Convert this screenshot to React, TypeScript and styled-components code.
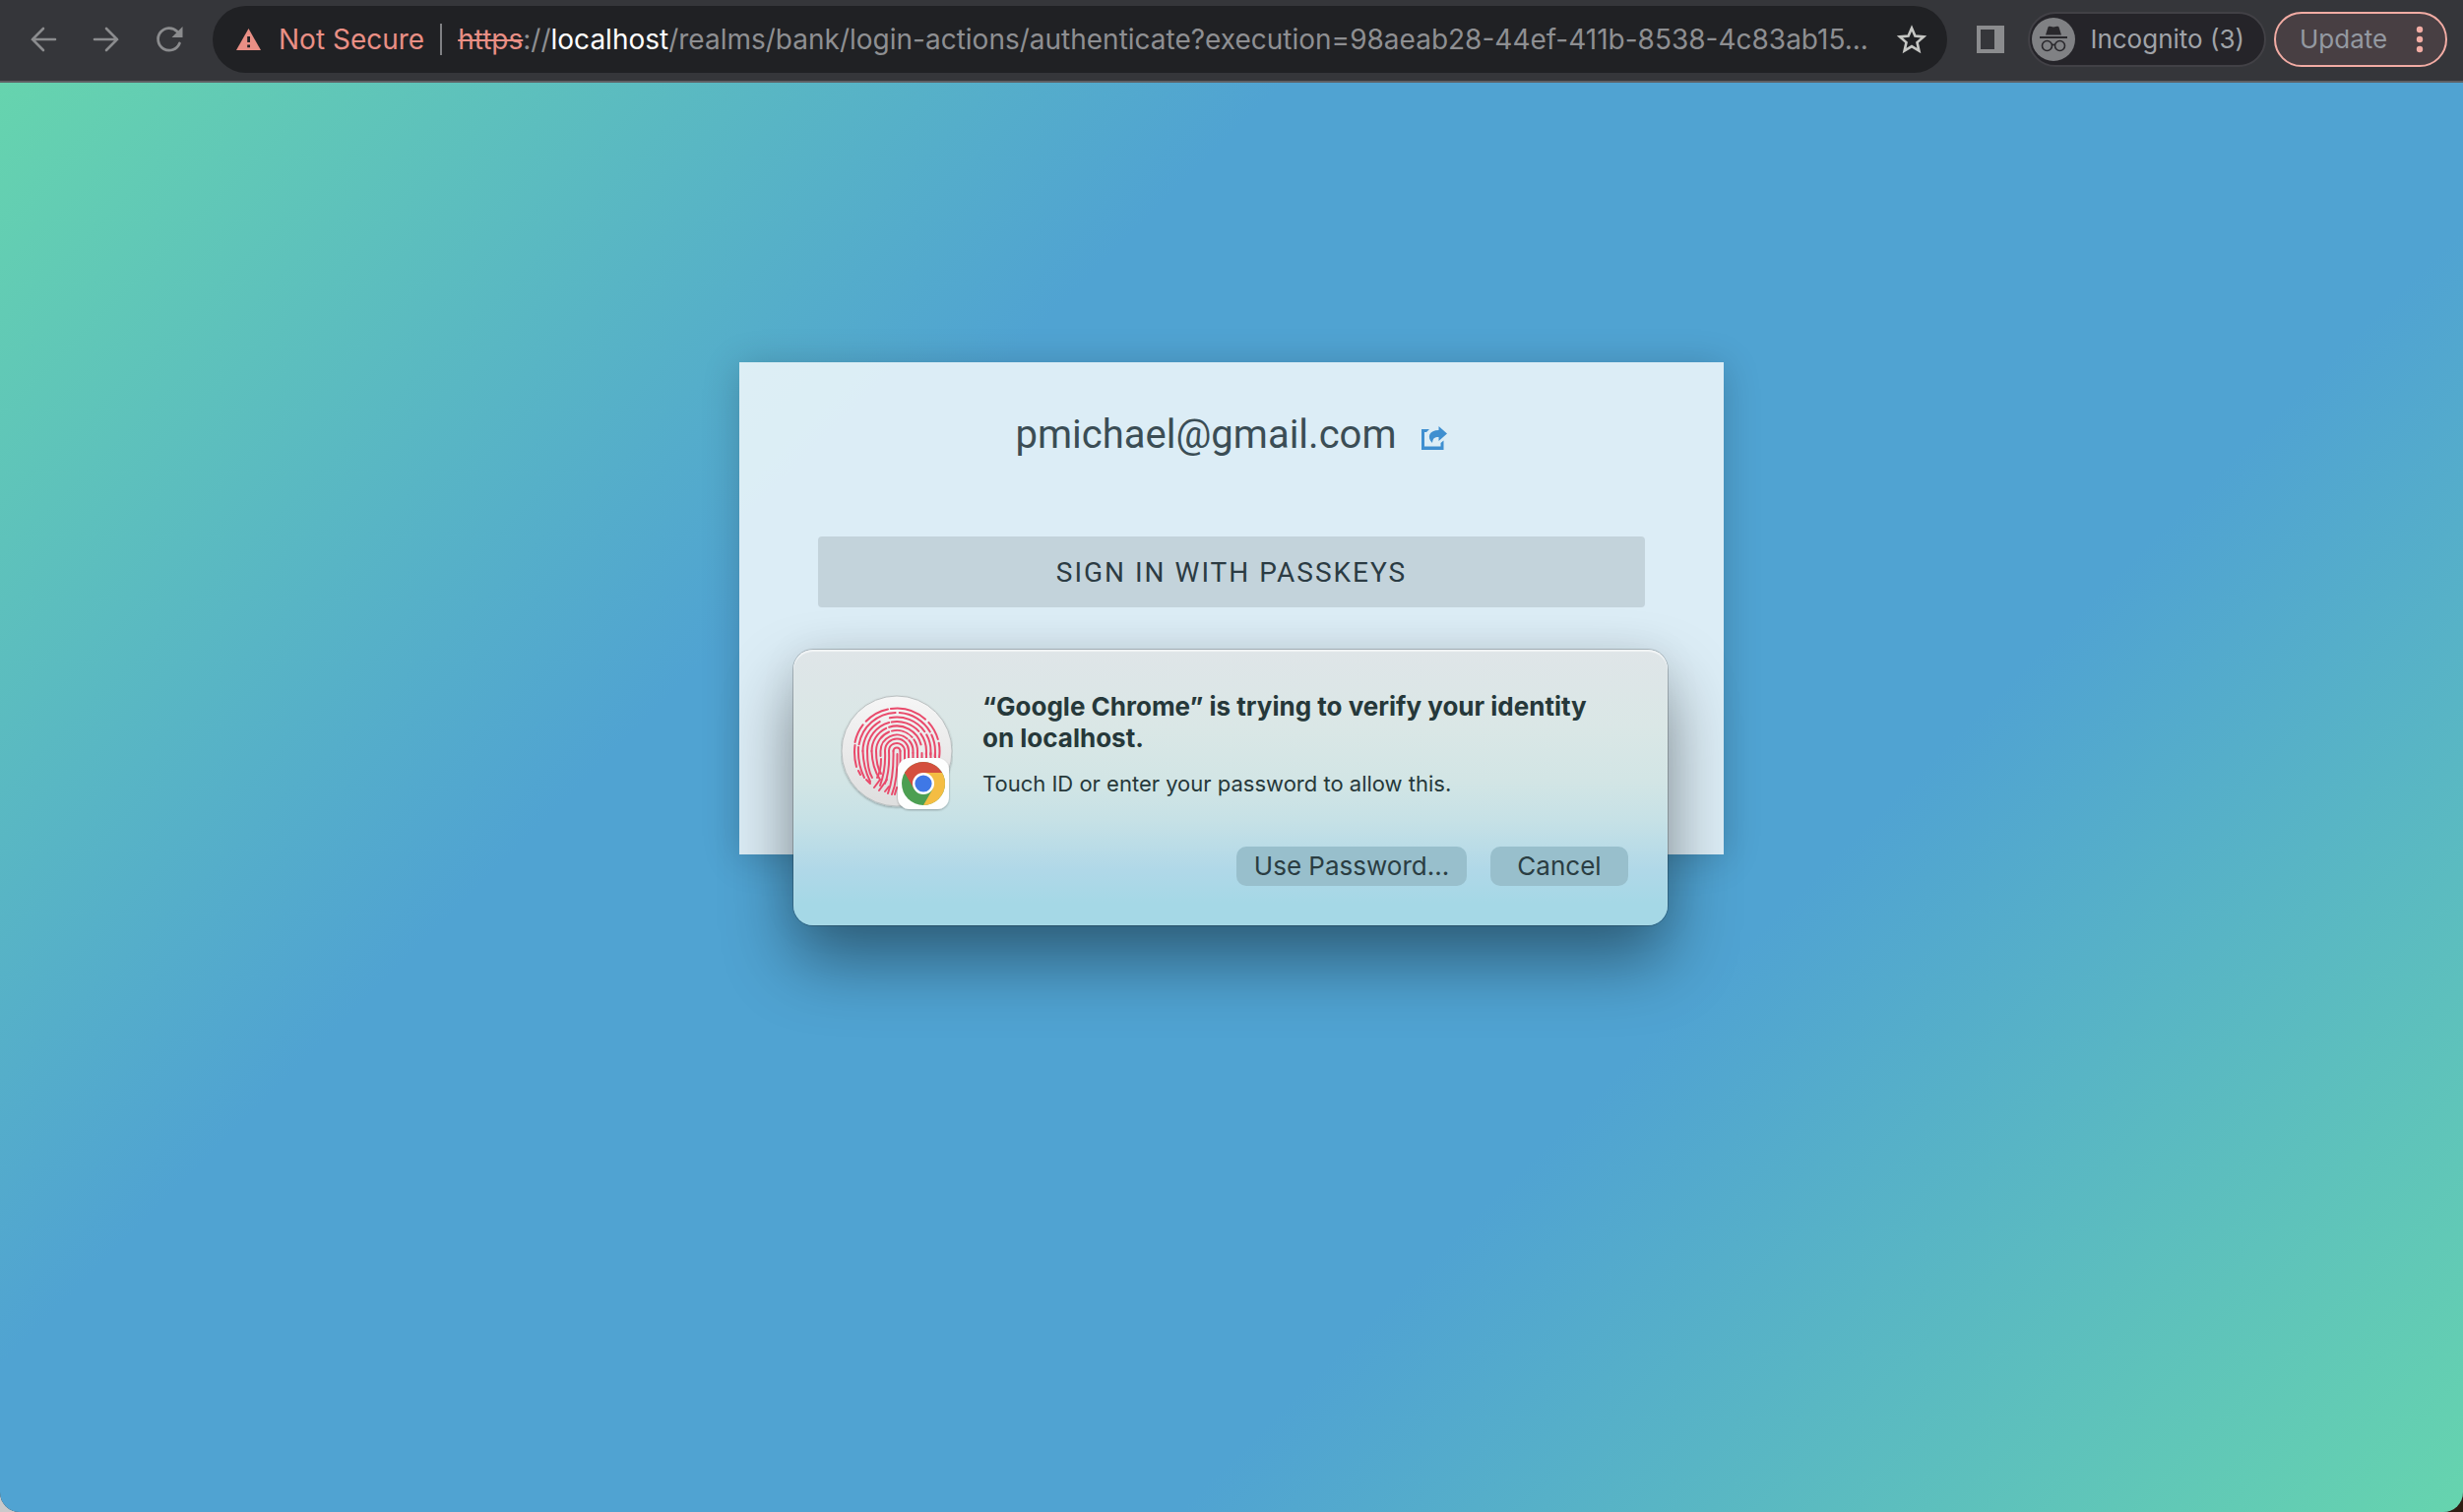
import React from "react";
import styled, { createGlobalStyle } from "styled-components";

const ui = `Inter, Roboto, "Liberation Sans", sans-serif`;

const GlobalStyle = createGlobalStyle`
  *, *::before, *::after { box-sizing: border-box; }
  html { background: linear-gradient(90deg, #c9c9cb 50%, #2e1c12 50%); }
  body { margin: 0; }
  button, input { font: inherit; color: inherit; }
`;

const Window = styled.div`
  display: flex;
  flex-direction: column;
  min-height: 100vh;
  font-family: ${ui};
  background: #35363a;
  border-radius: 0 0 20px 20px;
  overflow: hidden;
`;

const Toolbar = styled.header`
  display: flex;
  align-items: center;
  height: 84px;
  padding: 0 16px 2px 12px;
  border-bottom: 2px solid #5f6064;
  background: #35363a;
`;

const NavGroup = styled.nav`
  display: flex;
  flex: none;
  margin-right: 12px;
`;

const IconButton = styled.button<{ $wide?: boolean }>`
  display: grid;
  place-items: center;
  flex: none;
  width: ${(p) => (p.$wide ? 82 : 64)}px;
  height: 56px;
  padding: ${(p) => (p.$wide ? "0 0 0 6px" : "0")};
  border: 0;
  background: none;
  color: #8b8c8e;
`;

const AddressBar = styled.div`
  display: flex;
  align-items: center;
  flex: 1;
  min-width: 0;
  height: 68px;
  padding: 0 4px 0 24px;
  border-radius: 34px;
  background: #202124;
  color: #8e8f92;
  font-size: 28px;
  line-height: 40px;
`;

const Security = styled.button`
  display: flex;
  align-items: center;
  gap: 18px;
  flex: none;
  padding: 0 16px 0 0;
  border: 0;
  background: none;
  color: #e98f85;
`;

const Divider = styled.span`
  flex: none;
  width: 2px;
  height: 32px;
  margin-right: 16px;
  background: #7f8083;
`;

const Url = styled.div`
  flex: 1;
  min-width: 0;
  overflow: hidden;
  white-space: nowrap;
`;

const Scheme = styled.s`
  color: #e98f85;
  text-decoration-thickness: 2px;
`;

const Host = styled.span`
  color: #ffffff;
`;

const Pill = styled.button<{ $update?: boolean }>`
  display: flex;
  align-items: center;
  justify-content: space-between;
  flex: none;
  width: ${(p) => (p.$update ? 176 : 242)}px;
  height: 56px;
  margin-left: ${(p) => (p.$update ? 8 : 0)}px;
  padding: ${(p) => (p.$update ? "0 22px 0 24px" : "0 20px 0 2px")};
  border: 2px solid ${(p) => (p.$update ? "#f2aca4" : "#424146")};
  border-radius: 28px;
  background: ${(p) => (p.$update ? "#483f43" : "#252429")};
  color: ${(p) => (p.$update ? "#9499a1" : "#a0a3a8")};
  font-size: 26px;
  line-height: 40px;
`;

const Page = styled.main`
  flex: 1;
  display: flex;
  flex-direction: column;
  align-items: center;
  padding: 284px 24px 120px;
  background: linear-gradient(135deg, #66d4ae 0%, #50a3d2 33%, #50a3d2 67%, #66d4ae 100%);
`;

const Card = styled.section`
  width: 100%;
  max-width: 1000px;
  min-height: 500px;
  padding: 46px 80px;
  background: rgba(255, 255, 255, 0.8);
  box-shadow: 0 4px 36px rgba(0, 0, 0, 0.2);
  font-family: Roboto, "Noto Sans", sans-serif;
`;

const Account = styled.div`
  display: flex;
  align-items: center;
  justify-content: center;
  gap: 26px;
  height: 56px;
  margin-bottom: 75px;
`;

const Email = styled.h1`
  margin: 0;
  color: #3b4d55;
  font-size: 40px;
  font-weight: 400;
  line-height: 56px;
`;

const RestartLink = styled.a`
  display: flex;
  padding-top: 6px;
  color: #3f8fd0;
`;

const PasskeyButton = styled.button`
  display: block;
  width: 100%;
  height: 72px;
  border: 0;
  border-radius: 4px;
  background: #c3d3db;
  color: #2b3b43;
  font-size: 28px;
  letter-spacing: 2px;
  text-transform: uppercase;
`;

const Dialog = styled.section`
  display: grid;
  grid-template-columns: 114px 1fr;
  column-gap: 30px;
  align-content: space-between;
  width: 100%;
  max-width: 888px;
  min-height: 280px;
  margin-top: -208px;
  margin-right: 2px;
  padding: 40px 40px 40px 48px;
  border-radius: 20px;
  background: linear-gradient(180deg, #dfe5e8 0%, #dae7e6 28%, #d2e5e5 48%, #c6e1e6 62%, #b0d8e8 80%, #a5d8e6 92%, #a5d8e6 100%);
  box-shadow:
    inset 0 2px 1px rgba(255, 255, 255, 0.6),
    0 0 0 1px rgba(0, 0, 0, 0.2),
    0 36px 70px rgba(0, 0, 0, 0.42),
    0 0 40px rgba(0, 0, 0, 0.06);
`;

const DialogText = styled.div`
  padding-top: 2px;
  color: #26383a;
`;

const DialogTitle = styled.h2`
  margin: 0 0 14px;
  padding-right: 20px;
  font-size: 26px;
  font-weight: 700;
  line-height: 32px;
`;

const DialogNote = styled.p`
  margin: 0;
  font-size: 22px;
  line-height: 32px;
`;

const Actions = styled.div`
  grid-column: 1 / -1;
  display: flex;
  justify-content: flex-end;
  gap: 24px;
`;

const DialogButton = styled.button<{ $wide?: boolean }>`
  width: ${(p) => (p.$wide ? 234 : 140)}px;
  height: 40px;
  padding: 0;
  border: 0;
  border-radius: 10px;
  background: #98bfcc;
  color: #2a3d42;
  font-size: 26px;
  line-height: 40px;
`;

const TouchIdBox = styled.div`
  margin-top: 6px;
  height: 120px;
`;

const rad = (d: number) => (d * Math.PI) / 180;
const at = (r: number, d: number) =>
  `${(57 + r * Math.cos(rad(d))).toFixed(1)} ${(57 + r * Math.sin(rad(d))).toFixed(1)}`;
const arc = (r: number, a: number, b: number) =>
  `M${at(r, a)}A${r} ${r} 0 ${b - a > 180 ? 1 : 0} 1 ${at(r, b)}`;

const ridges: string[] = [
  arc(43.5, 192, 218), arc(43.5, 224, 258), arc(43.5, 262, 312), arc(43.5, 318, 344), arc(43.5, 349, 368),
  arc(39, 190, 268), arc(39, 274, 330), arc(39, 335, 368),
  arc(34.5, 180, 240), arc(34.5, 258, 325), arc(34.5, 331, 366),
  arc(30, 180, 255), arc(30, 260, 318), arc(30, 324, 366),
  arc(25.5, 180, 245), arc(25.5, 252, 345),
  arc(21, 182, 248), arc(21, 256, 318), arc(21, 326, 366),
  arc(16.5, 180, 310), arc(16.5, 318, 366),
  arc(12, 184, 360), arc(8, 180, 245), arc(8, 252, 360), arc(3.5, 180, 360),
  "M14.5 51Q13 62 16 73", "M18 53Q17 70 24 84M18 77L20 81",
  "M22.5 57Q23 74 30 88", "M27 57Q27 76 32 84M26 86L30 90",
  "M31.5 57Q32 74 40 86L34 94", "M36 57Q36 72 41 80",
  "M40.5 58V62", "M41 65Q41 77 37 84", "M47 86L39 97",
  "M45 57Q46 76 40 92", "M49 57Q50 77 45 90", "M49 93L45 98",
  "M53.5 57Q54 84 48 100", "M57.5 60Q58 86 52 101", "M60.5 57V90", "M65 57V74", "M69 57V70",
  "M73.5 59V70", "M78 57V70", "M82.5 59V70", "M87 59V70", "M91.5 59V70", "M96 59V66", "M57 94L55 101",
];

const TouchIdIcon = () => (
  <svg width="114" height="120" viewBox="0 0 114 120" role="img" aria-label="Touch ID">
    <defs>
      <linearGradient id="disc" x1="0" y1="0" x2="0" y2="1">
        <stop offset="0" stopColor="#f6f6f6" />
        <stop offset="1" stopColor="#dedede" />
      </linearGradient>
      <filter id="soft" x="-10%" y="-10%" width="120%" height="125%">
        <feDropShadow dx="0" dy="1" stdDeviation="1" floodOpacity="0.3" />
      </filter>
    </defs>
    <circle cx="57" cy="57" r="56" fill="url(#disc)" stroke="#b9bfc0" filter="url(#soft)" />
    <g fill="none" stroke="#e94a6b" strokeWidth="2" strokeLinecap="round">
      {ridges.map((d) => (
        <path key={d} d={d} />
      ))}
    </g>
    <rect x="58" y="64" width="52" height="52" rx="12" fill="#fdfefe" filter="url(#soft)" />
    <g transform="translate(84 90)">
      <circle r="22" fill="#4c9f52" />
      <path d="M-19.05-11A22 22 0 0 1 19.05-11L0-11L-9.53 5.5Z" fill="#d4503e" />
      <path d="M19.05-11A22 22 0 0 1 0 22L9.53 5.5L0-11Z" fill="#f4bd43" />
      <circle r="11" fill="#ffffff" />
      <circle r="8.6" fill="#3f78e6" />
    </g>
  </svg>
);

export default function App() {
  return (
    <>
      <GlobalStyle />
      <Window>
        <Toolbar>
          <NavGroup aria-label="History">
            <IconButton aria-label="Back">
              <svg width="28" height="28" viewBox="0 0 28 28" fill="none" stroke="currentColor" strokeWidth="2.6" strokeLinecap="round">
                <path d="M26 14H3M14 3L3 14L14 25" />
              </svg>
            </IconButton>
            <IconButton aria-label="Forward">
              <svg width="28" height="28" viewBox="0 0 28 28" fill="none" stroke="currentColor" strokeWidth="2.6" strokeLinecap="round">
                <path d="M2 14H25M14 3L25 14L14 25" />
              </svg>
            </IconButton>
            <IconButton aria-label="Reload">
              <svg width="28" height="28" viewBox="0 0 28 28" fill="none" stroke="currentColor" strokeWidth="2.8" strokeLinecap="round">
                <path d="M24.4 18A11.3 11.3 0 1 1 22 6" />
                <path d="M27.5 1V12H16.5Z" fill="currentColor" stroke="none" />
              </svg>
            </IconButton>
          </NavGroup>
          <AddressBar>
            <Security>
              <svg width="25" height="22" viewBox="0 0 25 22" aria-hidden="true">
                <path d="M12.5 0L25 22H0Z" fill="currentColor" />
                <path d="M11.2 8h2.8v6h-2.8zM11.2 16.4h2.8v2.8h-2.8z" fill="#202124" />
              </svg>
              Not Secure
            </Security>
            <Divider />
            <Url>
              <Scheme>https</Scheme>://<Host>localhost</Host>
              /realms/bank/login-actions/authenticate?execution=98aeab28-44ef-411b-8538-4c83ab15...
            </Url>
            <IconButton aria-label="Bookmark this tab">
              <svg width="30" height="30" viewBox="0 0 30 30" fill="none" stroke="#c6c7c4" strokeWidth="2.6">
                <path d="M15 3.6L18.4 11.6L27 12.4L20.5 18.1L22.4 26.6L15 22.1L7.6 26.6L9.5 18.1L3 12.4L11.6 11.6Z" />
              </svg>
            </IconButton>
          </AddressBar>
          <IconButton $wide aria-label="Side panel">
            <svg width="28" height="28" viewBox="0 0 28 28">
              <path d="M0 0H28V28H0ZM4 4V24H18V4Z" fill="currentColor" fillRule="evenodd" />
            </svg>
          </IconButton>
          <Pill>
            <svg width="44" height="44" viewBox="0 0 44 44" aria-hidden="true">
              <circle cx="22" cy="22" r="22" fill="#808184" />
              <path d="M16.5 9.5Q17 8.3 18.5 8.8L22 9.6L25.5 8.8Q27 8.3 27.5 9.5L30 17.5H14ZM8 19H36V21H8Z" fill="#29282c" />
              <g fill="none" stroke="#29282c" strokeWidth="1.6">
                <circle cx="15.5" cy="28.5" r="5" />
                <circle cx="28.5" cy="28.5" r="5" />
                <path d="M20.5 28Q22 26.5 23.5 28" />
              </g>
            </svg>
            Incognito (3)
          </Pill>
          <Pill $update>
            Update
            <svg width="8" height="28" viewBox="0 0 8 28" fill="#f2aca4" aria-hidden="true">
              <circle cx="4" cy="4" r="3.2" />
              <circle cx="4" cy="14" r="3.2" />
              <circle cx="4" cy="24" r="3.2" />
            </svg>
          </Pill>
        </Toolbar>
        <Page>
          <Card>
            <Account>
              <Email>pmichael@gmail.com</Email>
              <RestartLink href="#restart" aria-label="Restart login">
                <svg width="26" height="24" viewBox="0 0 26 24" fill="currentColor">
                  <path d="M0 3H8L5 6H3V20.5H19.5V17L22.5 14.5V24H0Z" />
                  <path d="M17.5 0L26 7.5L17.5 15V11C13 11 11.5 12.5 11 17C5 11 8 4 17.5 4Z" />
                </svg>
              </RestartLink>
            </Account>
            <PasskeyButton>Sign in with Passkeys</PasskeyButton>
          </Card>
          <Dialog role="dialog" aria-labelledby="dialog-title">
            <TouchIdBox>
              <TouchIdIcon />
            </TouchIdBox>
            <DialogText>
              <DialogTitle id="dialog-title">
                “Google Chrome” is trying to verify your identity on localhost.
              </DialogTitle>
              <DialogNote>Touch ID or enter your password to allow this.</DialogNote>
            </DialogText>
            <Actions>
              <DialogButton $wide>Use Password...</DialogButton>
              <DialogButton>Cancel</DialogButton>
            </Actions>
          </Dialog>
        </Page>
      </Window>
    </>
  );
}
